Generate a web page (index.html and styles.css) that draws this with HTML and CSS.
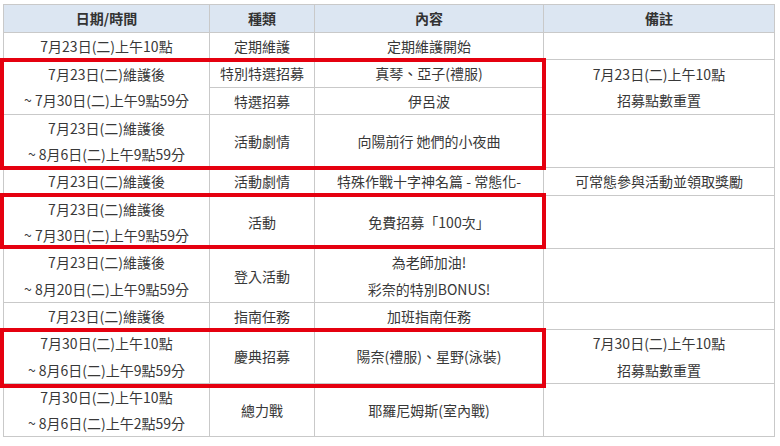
FILE: index.html
```html
<!DOCTYPE html>
<html lang="zh-Hant">
<head>
<meta charset="utf-8">
<link rel="stylesheet" href="styles.css">
</head>
<body>
<div class="wrap">
<table class="sched">
<colgroup><col class="c1"><col class="c2"><col class="c3"><col class="c4"></colgroup>
<thead>
<tr><th>日期/時間</th><th>種類</th><th>內容</th><th>備註</th></tr>
</thead>
<tbody>
<tr><td>7月23日(二)上午10點</td><td>定期維護</td><td>定期維護開始</td><td></td></tr>
<tr><td rowspan="2">7月23日(二)維護後<br>~ 7月30日(二)上午9點59分</td><td>特別特選招募</td><td>真琴、亞子(禮服)</td><td rowspan="2">7月23日(二)上午10點<br>招募點數重置</td></tr>
<tr><td>特選招募</td><td>伊呂波</td></tr>
<tr><td>7月23日(二)維護後<br>~ 8月6日(二)上午9點59分</td><td>活動劇情</td><td>向陽前行 她們的小夜曲</td><td></td></tr>
<tr><td>7月23日(二)維護後</td><td>活動劇情</td><td>特殊作戰十字神名篇 - 常態化-</td><td>可常態參與活動並領取獎勵</td></tr>
<tr><td>7月23日(二)維護後<br>~ 7月30日(二)上午9點59分</td><td>活動</td><td>免費招募「100次」</td><td></td></tr>
<tr><td>7月23日(二)維護後<br>~ 8月20日(二)上午9點59分</td><td>登入活動</td><td>為老師加油!<br>彩奈的特別BONUS!</td><td></td></tr>
<tr><td>7月23日(二)維護後</td><td>指南任務</td><td>加班指南任務</td><td></td></tr>
<tr><td>7月30日(二)上午10點<br>~ 8月6日(二)上午9點59分</td><td>慶典招募</td><td>陽奈(禮服)、星野(泳裝)</td><td>7月30日(二)上午10點<br>招募點數重置</td></tr>
<tr><td>7月30日(二)上午10點<br>~ 8月6日(二)上午2點59分</td><td>總力戰</td><td>耶羅尼姆斯(室內戰)</td><td></td></tr>
</tbody>
</table>
<div class="mark mark-1"></div>
<div class="mark mark-2"></div>
<div class="mark mark-3"></div>
</div>
</body>
</html>
```
FILE: styles.css
```css
html, body {
  margin: 0;
  padding: 0;
  background: #ffffff;
}
body {
  padding: 4px 3px;
  font-family: "Noto Sans CJK TC", "Noto Sans", sans-serif;
  font-size: 14px;
  color: #383838;
}
.wrap {
  position: relative;
  width: 771px;
}
.sched {
  border-collapse: collapse;
  width: 771px;
  table-layout: fixed;
}
.c1 { width: 206px; }
.c2 { width: 105px; }
.c3 { width: 229px; }
.c4 { width: 231px; }
.sched th,
.sched td {
  border: 1px solid #c9c9c9;
  text-align: center;
  vertical-align: middle;
  padding: 0;
  line-height: 26.3px;
  white-space: nowrap;
}
.sched th {
  background: #dce6f2;
  font-weight: bold;
  color: #333333;
  height: 27px;
}
.mark {
  position: absolute;
  left: -3px;
  width: 546px;
  border: 4px solid #e5000f;
  box-sizing: border-box;
  pointer-events: none;
}
.mark-1 { top: 54px; height: 112px; }
.mark-2 { top: 189px; height: 56px; }
.mark-3 { top: 324px; height: 60px; }
```
